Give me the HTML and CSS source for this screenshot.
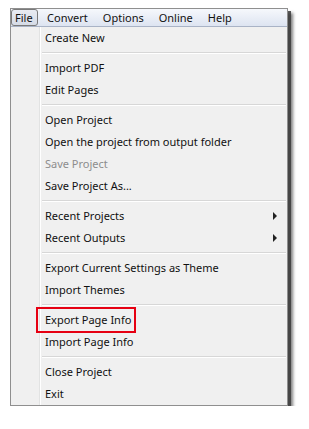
FILE: index.html
```html
<!DOCTYPE html>
<html>
<head>
<meta charset="utf-8">
<link rel="stylesheet" href="styles.css">
</head>
<body>
<div class="window">
  <div class="menubar">
    <span class="top active">File</span>
    <span class="top">Convert</span>
    <span class="top">Options</span>
    <span class="top">Online</span>
    <span class="top">Help</span>
  </div>
  <div class="menu">
    <div class="item">Create New</div>
    <div class="sep"></div>
    <div class="item">Import PDF</div>
    <div class="item">Edit Pages</div>
    <div class="sep"></div>
    <div class="item">Open Project</div>
    <div class="item">Open the project from output folder</div>
    <div class="item disabled">Save Project</div>
    <div class="item">Save Project As...</div>
    <div class="sep"></div>
    <div class="item sub">Recent Projects<span class="arrow"></span></div>
    <div class="item sub">Recent Outputs<span class="arrow"></span></div>
    <div class="sep"></div>
    <div class="item">Export Current Settings as Theme</div>
    <div class="item">Import Themes</div>
    <div class="sep"></div>
    <div class="item marked">Export Page Info<span class="highlight"></span></div>
    <div class="item">Import Page Info</div>
    <div class="sep"></div>
    <div class="item">Close Project</div>
    <div class="item">Exit</div>
  </div>
</div>
</body>
</html>
```

FILE: styles.css
```css
html, body {
  margin: 0;
  padding: 0;
  background: #ffffff;
}
body {
  font-family: "Noto Sans", "Open Sans", sans-serif;
  font-size: 11px;
  color: #111;
}
.window {
  margin: 8px 0 0 10px;
  width: 276px;
  border: 1px solid #8f8f8f;
  box-shadow: 3px 3px 0 rgba(60, 60, 60, 0.85), 5px 5px 3px rgba(40, 40, 40, 0.6);
  background: #f0f0f0;
}
.menubar {
  height: 17px;
  display: flex;
  align-items: center;
  background: linear-gradient(#f6f8fc, #dde4f1);
  border-bottom: 1px solid #a9b3c6;
  padding-left: 0;
}
.top {
  line-height: 15px;
  padding: 0 6.5px;
  border: 1px solid transparent;
}
.top.active {
  border-color: #7a7a7a;
  border-radius: 3px;
  background: linear-gradient(#e8ebf2, #d5dbe6);
  padding: 0 4px 0 3px;
  margin-right: 2px;
}
.menu {
  position: relative;
  background: #f0f0f0;
  padding-left: 29px;
}
.menu::before {
  content: "";
  position: absolute;
  left: 28px;
  top: 0;
  bottom: 0;
  width: 1px;
  background: #e2e3e3;
  border-right: 1px solid #ffffff;
}
.item {
  position: relative;
  height: 22px;
  line-height: 22px;
  padding-left: 5px;
  white-space: nowrap;
}
.item.disabled {
  color: #8d8d8d;
}
.sep {
  height: 8px;
  position: relative;
  margin-left: 2px;
}
.sep::after {
  content: "";
  position: absolute;
  left: 0;
  right: 1px;
  top: 3px;
  height: 1px;
  background: #d7d7d7;
  border-bottom: 1px solid #ffffff;
}
.arrow {
  position: absolute;
  right: 10px;
  top: 7px;
  width: 0;
  height: 0;
  border-left: 4px solid #222;
  border-top: 4px solid transparent;
  border-bottom: 4px solid transparent;
}
.highlight {
  position: absolute;
  left: -4px;
  top: -2px;
  width: 96px;
  height: 22px;
  border: 2px solid #e60012;
}
```
